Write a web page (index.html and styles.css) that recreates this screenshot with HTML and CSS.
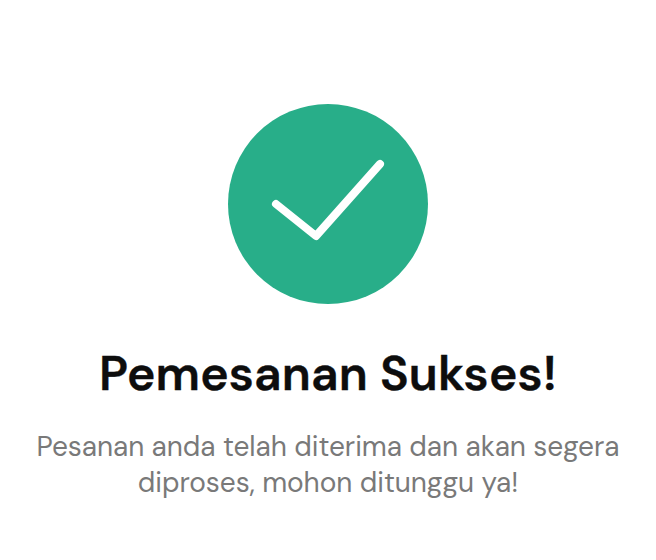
FILE: index.html
```html
<!DOCTYPE html>
<html lang="id">
<head>
<meta charset="utf-8">
<title>Pemesanan Sukses</title>
<link rel="stylesheet" href="styles.css">
</head>
<body>
<main class="success">
  <svg class="icon" viewBox="0 0 200 200" aria-hidden="true">
    <circle cx="100" cy="100" r="100" fill="#28ae89"/>
    <path d="M48 100 88 132 152 60" fill="none" stroke="#fff" stroke-width="8" stroke-linecap="round" stroke-linejoin="round"/>
  </svg>
  <h1 class="title">Pemesanan Sukses!</h1>
  <p class="message">Pesanan anda telah diterima dan akan segera diproses, mohon ditunggu ya!</p>
</main>
</body>
</html>
```

FILE: styles.css
```css
body {
  margin: 0;
  background: #fff;
}
.success {
  display: flex;
  flex-direction: column;
  align-items: center;
  padding: 104px 24px 0;
  text-align: center;
}
.icon {
  width: 200px;
  height: 200px;
}
.title {
  margin: 38px 0 0;
  font: 600 48px/64px "DM Sans", Inter, sans-serif;
  letter-spacing: 0.2px;
  -webkit-text-stroke: 0.4px #0d0d0d;
  color: #0d0d0d;
}
.message {
  margin: 23px 0 0;
  font: 400 28px/36px "DM Sans", Inter, sans-serif;
  letter-spacing: -0.04px;
  color: #797979;
}
```
